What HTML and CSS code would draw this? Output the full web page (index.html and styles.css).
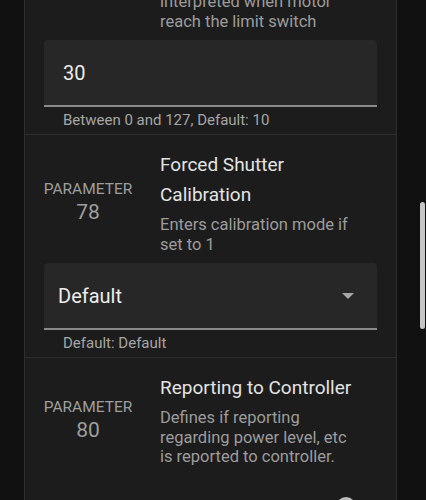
FILE: index.html
```html
<!DOCTYPE html>
<html>
<head>
<meta charset="utf-8">
<link rel="stylesheet" href="styles.css">
</head>
<body>
<div class="page">
  <div class="card">
    <div class="scroll">
      <section class="param">
        <div class="row">
          <div class="label"></div>
          <div class="info">
            <div class="desc">interpreted when motor reach the limit switch</div>
          </div>
        </div>
        <div class="field">
          <div class="box input"><span class="value">30</span></div>
          <div class="helper">Between 0 and 127, Default: 10</div>
        </div>
      </section>
      <section class="param">
        <div class="row">
          <div class="label">
            <div class="label-name">PARAMETER</div>
            <div class="label-num">78</div>
          </div>
          <div class="info">
            <div class="title">Forced Shutter Calibration</div>
            <div class="desc">Enters calibration mode if set to 1</div>
          </div>
        </div>
        <div class="field">
          <div class="box select"><span class="value">Default</span><span class="arrow"></span></div>
          <div class="helper">Default: Default</div>
        </div>
      </section>
      <section class="param last">
        <div class="row">
          <div class="label">
            <div class="label-name">PARAMETER</div>
            <div class="label-num">80</div>
          </div>
          <div class="info">
            <div class="title">Reporting to Controller</div>
            <div class="desc">Defines if reporting regarding power level, etc is reported to controller.</div>
          </div>
        </div>
        <div class="switch-row">
          <div class="switch"><span class="track"></span><span class="thumb"></span></div>
        </div>
      </section>
    </div>
  </div>
</div>
<div class="scrollbar"></div>
</body>
</html>
```

FILE: styles.css
```css
html, body {
  margin: 0;
  padding: 0;
  background: #111111;
  height: 100%;
  overflow: hidden;
}
body {
  font-family: Roboto, "Noto Sans", "Liberation Sans", sans-serif;
  color: #e1e1e1;
}
.page {
  padding: 0 29px 0 24px;
}
.card {
  background: #1c1c1c;
  border-left: 1px solid #2e2e2e;
  border-right: 1px solid #2e2e2e;
  min-height: 520px;
}
.scroll {
  margin-top: -8px;
}
.param {
  border-bottom: 1px solid #2e2e2e;
}
.param.last {
  border-bottom: none;
}
.row {
  display: flex;
  align-items: center;
  padding-top: 15px;
}
.param:first-child .row {
  padding-top: 0;
}
.label {
  width: 126px;
  flex: none;
  text-align: center;
  color: #9e9e9e;
}
.label-name {
  font-size: 15.5px;
  line-height: 20px;
}
.label-num {
  font-size: 21px;
  line-height: 26px;
}
.info {
  width: 200px;
  margin-left: 9px;
}
.title {
  font-size: 19px;
  line-height: 30px;
  color: #e3e3e3;
  margin-bottom: 5px;
}
.desc {
  font-size: 16.5px;
  line-height: 19.5px;
  color: #9c9c9c;
}
.field {
  padding: 9px 19px 0 19px;
}
.box {
  height: 65px;
  background: #272727;
  border-radius: 4px 4px 0 0;
  border-bottom: 2px solid #8a8a8a;
  display: flex;
  align-items: center;
  color: #ececec;
  font-size: 20px;
}
.input {
  padding-left: 19px;
}
.select {
  padding: 0 23px 0 14px;
  justify-content: space-between;
}
.arrow {
  width: 0;
  height: 0;
  border-left: 6px solid transparent;
  border-right: 6px solid transparent;
  border-top: 6px solid #a8a8a8;
}
.helper {
  font-size: 15px;
  line-height: 20px;
  color: #a6a6a6;
  padding: 3px 0 4px 19px;
}
.switch-row {
  display: flex;
  justify-content: flex-end;
  padding: 30px 21px 20px 0;
}
.switch {
  position: relative;
  width: 38px;
  height: 20px;
}
.track {
  position: absolute;
  left: 3px;
  right: 3px;
  top: 4px;
  height: 14px;
  border-radius: 7px;
  background: #2a2a2a;
}
.thumb {
  position: absolute;
  left: -1px;
  top: 0;
  width: 20px;
  height: 20px;
  border-radius: 50%;
  background: #bdbdbd;
}
.scrollbar {
  position: fixed;
  right: 1px;
  top: 202px;
  width: 5px;
  height: 127px;
  border-radius: 3px;
  background: #c6c6c6;
}
```
